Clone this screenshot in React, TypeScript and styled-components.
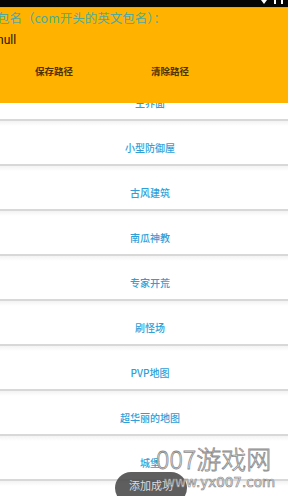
import React from "react";
import styled, { createGlobalStyle } from "styled-components";

const GlobalStyle = createGlobalStyle`
  html, body { margin: 0; padding: 0; background: #fff; overflow: hidden; }
  body { font-family: Roboto, "Noto Sans CJK SC", "Noto Sans", sans-serif; }
  * { box-sizing: border-box; }
`;

const Screen = styled.div`
  position: relative;
  width: 288px;
  height: 496px;
  overflow: hidden;
  display: flex;
  flex-direction: column;
  background: #ffffff;
`;

const StatusBar = styled.div`
  height: 7px;
  flex: none;
  background: #050505;
  display: flex;
  justify-content: flex-end;
  align-items: flex-start;
  padding-right: 2px;
  position: relative;
  z-index: 3;
`;

const Header = styled.div`
  height: 96px;
  flex: none;
  background: #ffb300;
  position: relative;
  z-index: 2;
  display: flex;
  flex-direction: column;
  border-top: 1px solid #f0a400;
`;

const PackageLabel = styled.div`
  margin-left: -3px;
  font-family: "Noto Sans CJK SC", sans-serif;
  font-size: 12.5px;
  line-height: 19px;
  color: #4fa9a0;
  white-space: nowrap;
`;

const NullText = styled.div`
  margin-top: 5px;
  margin-left: -3px;
  font-family: Roboto, sans-serif;
  font-size: 12px;
  line-height: 16px;
  color: #1c1600;
`;

const ButtonRow = styled.div`
  margin-top: 15px;
  margin-left: -4px;
  display: grid;
  grid-template-columns: 116px 116px;
`;

const HeaderButton = styled.div`
  text-align: center;
  font-family: "Noto Sans CJK SC", sans-serif;
  font-size: 9.5px;
  font-weight: 700;
  line-height: 16px;
  color: #4a3300;
`;

const ListViewport = styled.div`
  flex: 1;
  overflow: hidden;
  position: relative;
  z-index: 1;
`;

const ListInner = styled.div`
  margin-top: -27px;
  display: flex;
  flex-direction: column;
`;

const Row = styled.div`
  height: 45px;
  padding-top: 20px;
  padding-left: 12px;
  text-align: center;
  font-family: "Noto Sans CJK SC", sans-serif;
  font-size: 10px;
  font-weight: 500;
  line-height: 14px;
  color: #2f9fd8;
  background: linear-gradient(#f3f3f3, #ffffff 5px);
  border-bottom: 2px solid #d8d8d8;
`;

const Toast = styled.div`
  position: absolute;
  left: 115px;
  top: 472px;
  width: 72px;
  height: 32px;
  border-radius: 16px;
  background: rgba(72, 72, 72, 0.88);
  color: #dcdcdc;
  font-family: "Noto Sans CJK SC", sans-serif;
  font-size: 11px;
  line-height: 18px;
  padding-top: 4px;
  text-align: center;
  z-index: 5;
`;

const Watermark = styled.div`
  position: absolute;
  left: 156px;
  top: 444px;
  display: flex;
  flex-direction: column;
  align-items: flex-start;
  z-index: 6;
  pointer-events: none;
`;

const WatermarkTitle = styled.div`
  font-family: "Noto Sans CJK SC", sans-serif;
  font-size: 25px;
  font-weight: 300;
  line-height: 28px;
  color: rgba(255, 255, 255, 0.85);
  -webkit-text-stroke: 0.8px #8a8a8a;
  white-space: nowrap;
`;

const WatermarkUrl = styled.div`
  margin-top: 2px;
  margin-left: 8px;
  font-family: "DejaVu Sans", sans-serif;
  font-size: 13.5px;
  line-height: 16px;
  color: rgba(255, 255, 255, 0.9);
  -webkit-text-stroke: 0.7px #8a8a8a;
  white-space: nowrap;
`;

const items = [
  "主界面",
  "小型防御屋",
  "古风建筑",
  "南瓜神教",
  "专家开荒",
  "刷怪场",
  "PVP地图",
  "超华丽的地图",
  "城堡",
  "空岛生存",
];

export default function App() {
  return (
    <>
      <GlobalStyle />
      <Screen>
        <StatusBar>
          <svg width="26" height="5" viewBox="0 0 26 5">
            <path d="M1 0 L7 0 L4 4 Z" fill="#fff" />
            <rect x="14" y="0" width="2" height="4" fill="#fff" />
            <rect x="21" y="0" width="2" height="4" fill="#fff" />
          </svg>
        </StatusBar>
        <Header>
          <PackageLabel>包名（com开头的英文包名）：</PackageLabel>
          <NullText>null</NullText>
          <ButtonRow>
            <HeaderButton>保存路径</HeaderButton>
            <HeaderButton>清除路径</HeaderButton>
          </ButtonRow>
        </Header>
        <ListViewport>
          <ListInner>
            {items.map((t) => (
              <Row key={t}>{t}</Row>
            ))}
          </ListInner>
        </ListViewport>
        <Toast>添加成功</Toast>
        <Watermark>
          <WatermarkTitle>007游戏网</WatermarkTitle>
          <WatermarkUrl>www.yx007.com</WatermarkUrl>
        </Watermark>
      </Screen>
    </>
  );
}
